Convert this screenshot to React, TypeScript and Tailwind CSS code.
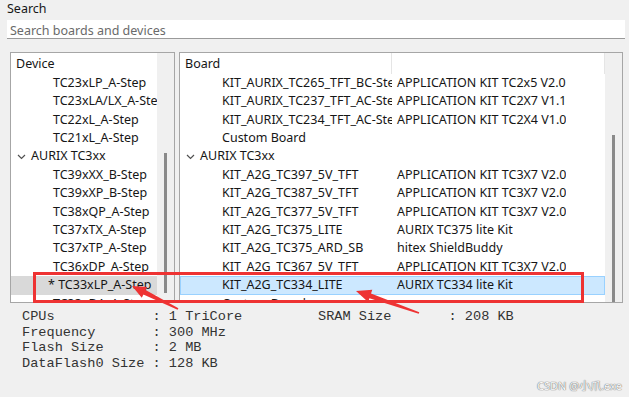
import React from "react";

const Chevron = () => (
  <svg width="9" height="6" viewBox="0 0 9 6" className="shrink-0">
    <path d="M1 1 L4.5 4.5 L8 1" fill="none" stroke="#505050" strokeWidth="1.2" />
  </svg>
);

type LeftRow = { t: string; kind: "item" | "group" | "star"; sel?: boolean };

const leftRows: LeftRow[] = [
  { t: "TC23xLP_A-Step", kind: "item" },
  { t: "TC23xLA/LX_A-Step", kind: "item" },
  { t: "TC22xL_A-Step", kind: "item" },
  { t: "TC21xL_A-Step", kind: "item" },
  { t: "AURIX TC3xx", kind: "group" },
  { t: "TC39xXX_B-Step", kind: "item" },
  { t: "TC39xXP_B-Step", kind: "item" },
  { t: "TC38xQP_A-Step", kind: "item" },
  { t: "TC37xTX_A-Step", kind: "item" },
  { t: "TC37xTP_A-Step", kind: "item" },
  { t: "TC36xDP_A-Step", kind: "item" },
  { t: "* TC33xLP_A-Step", kind: "star", sel: true },
  { t: "TC33xDA_A-Step", kind: "item" },
];

type RightRow = { a: string; b?: string; group?: boolean; sel?: boolean };

const rightRows: RightRow[] = [
  { a: "KIT_AURIX_TC265_TFT_BC-Step", b: "APPLICATION KIT TC2x5 V2.0" },
  { a: "KIT_AURIX_TC237_TFT_AC-Step", b: "APPLICATION KIT TC2X7 V1.1" },
  { a: "KIT_AURIX_TC234_TFT_AC-Step", b: "APPLICATION KIT TC2X4 V1.0" },
  { a: "Custom Board" },
  { a: "AURIX TC3xx", group: true },
  { a: "KIT_A2G_TC397_5V_TFT", b: "APPLICATION KIT TC3X7 V2.0" },
  { a: "KIT_A2G_TC387_5V_TFT", b: "APPLICATION KIT TC3X7 V2.0" },
  { a: "KIT_A2G_TC377_5V_TFT", b: "APPLICATION KIT TC3X7 V2.0" },
  { a: "KIT_A2G_TC375_LITE", b: "AURIX TC375 lite Kit" },
  { a: "KIT_A2G_TC375_ARD_SB", b: "hitex ShieldBuddy" },
  { a: "KIT_A2G_TC367_5V_TFT", b: "APPLICATION KIT TC3X7 V2.0" },
  { a: "KIT_A2G_TC334_LITE", b: "AURIX TC334 lite Kit", sel: true },
  { a: "Custom Board", b: "" },
];

export default function App() {
  return (
    <div className="relative w-[629px] h-[397px] overflow-hidden bg-[#f0f0f0] text-[#161616] text-[12.5px] font-['Noto_Sans',sans-serif]">
      {/* Search label */}
      <div className="pl-[7px] h-[20px] leading-[17px]">Search</div>
      {/* Search input */}
      <div className="ml-[7px] mr-[4px] h-[19px] bg-white border-b border-[#9a9a9a] pl-[3px] pt-[1px] leading-[19px] text-[#6a6a6a] overflow-hidden">
        Search boards and devices
      </div>

      {/* Panels */}
      <div className="flex gap-[4px] mt-[13px] ml-[10px]">
        {/* Left panel */}
        <div className="w-[165px] h-[251px] border border-[#a6a6a6] bg-white flex overflow-hidden">
          <div className="w-[146px] flex flex-col overflow-hidden">
            <div className="h-[21px] shrink-0 pl-[5px] pt-[1px] leading-[20px]">Device</div>
            {leftRows.map((r, i) => (
              <div
                key={i}
                className={`h-[18.4px] shrink-0 flex items-center whitespace-nowrap overflow-hidden ${
                  r.sel ? "bg-[#d9d9d9]" : ""
                }`}
              >
                {r.kind === "group" ? (
                  <div className="flex items-center pl-[6px] gap-[5px]">
                    <Chevron />
                    <span>{r.t}</span>
                  </div>
                ) : r.kind === "star" ? (
                  <span className="pl-[37px]">{r.t}</span>
                ) : (
                  <span className="pl-[42px]">{r.t}</span>
                )}
              </div>
            ))}
          </div>
          <div className="w-[17px] shrink-0 bg-[#f0f0f0] flex flex-col">
            <div className="h-[100px]" />
            <div className="ml-[7px] w-[3px] h-[140px] bg-[#8a8a8a]" />
          </div>
        </div>

        {/* Right panel */}
        <div className="w-[444px] h-[251px] border border-[#a6a6a6] bg-white flex overflow-hidden">
          <div className="w-[425px] flex flex-col overflow-hidden">
            <div className="h-[21px] shrink-0 flex">
              <div className="w-[212px] pl-[5px] pt-[1px] leading-[20px] border-r border-[#e5e5e5]">Board</div>
              <div className="flex-1 border-r border-[#e5e5e5]" />
            </div>
            {rightRows.map((r, i) => (
              <div
                key={i}
                className={`h-[18.4px] shrink-0 flex items-center whitespace-nowrap ${
                  r.sel ? "bg-[#cce8ff] border border-[#99d1ff]" : ""
                }`}
              >
                {r.group ? (
                  <div className="flex items-center pl-[6px] gap-[5px]">
                    <Chevron />
                    <span>{r.a}</span>
                  </div>
                ) : (
                  <>
                    <div className={`${r.sel ? "w-[211px] pl-[41px]" : "w-[212px] pl-[42px]"} shrink-0 overflow-hidden`}>
                      {r.a}
                    </div>
                    <div className="pl-[5px] overflow-hidden">{r.b}</div>
                  </>
                )}
              </div>
            ))}
          </div>
          <div className="w-[17px] shrink-0 bg-[#f0f0f0] flex flex-col">
            <div className="h-[82px]" />
            <div className="ml-[7px] w-[3px] flex-1 bg-[#8a8a8a]" />
          </div>
        </div>
      </div>

      {/* Info */}
      <div className="mt-[6px] pl-[22px] font-['Liberation_Mono',monospace] text-[13.6px] leading-[15.7px] text-[#333333] whitespace-pre">
        <div className="flex">
          <span className="w-[296px]">{"CPUs            : 1 TriCore"}</span>
          <span>{"SRAM Size       : 208 KB"}</span>
        </div>
        <div>{"Frequency       : 300 MHz"}</div>
        <div>{"Flash Size      : 2 MB"}</div>
        <div>{"DataFlash0 Size : 128 KB"}</div>
      </div>

      {/* CSDN watermark */}
      <div className="absolute left-[537px] top-[379px] whitespace-nowrap text-[11px] leading-[13px] text-[#fbfbfb] [text-shadow:0_0_1px_#6a6a6a,0_0_1px_#6a6a6a] font-['Noto_Sans','Noto_Sans_CJK_SC',sans-serif]">
        CSDN @小爪.exe
      </div>

      {/* Red annotations */}
      <svg className="absolute left-0 top-0 pointer-events-none" width="629" height="397">
        <rect x="34.5" y="273.5" width="548" height="28" fill="none" stroke="#ee3333" strokeWidth="3" />
        <polygon
          points="178.4,308.3 145.6,290.1 147.2,286.9 132,286 141.8,297.7 143.4,294.5 177.6,309.7"
          fill="#ee3333"
        />
        <polygon
          points="419.3,312.2 371,293.6 372.3,289.8 356,291 368.1,302.1 369.4,298.3 418.7,313.8"
          fill="#ee3333"
        />
      </svg>
    </div>
  );
}
